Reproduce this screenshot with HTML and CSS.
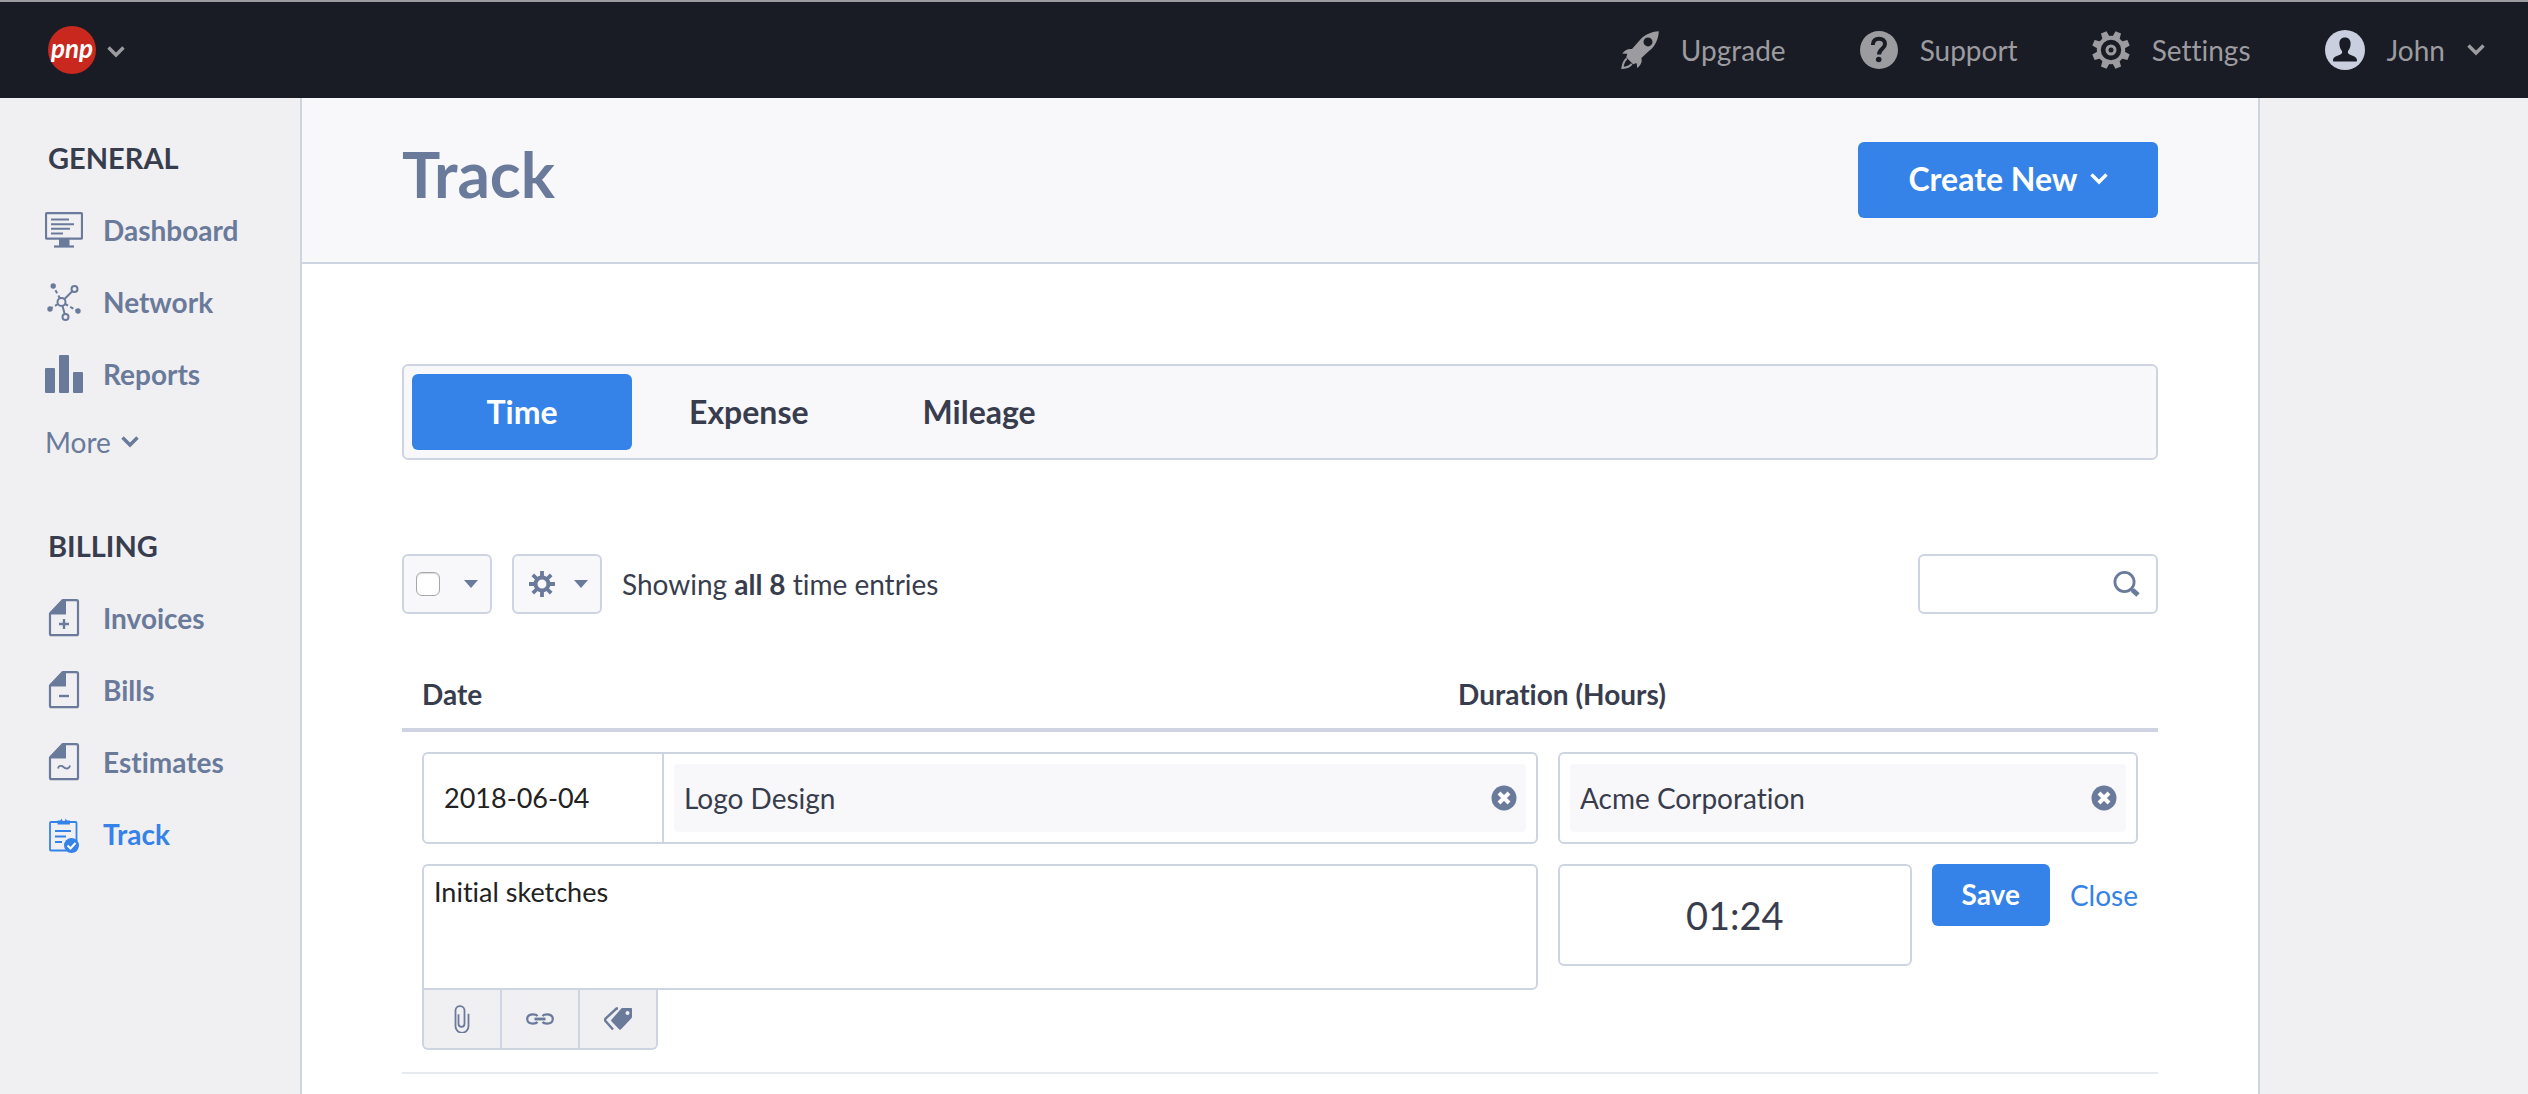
FILE: index.html
```html
<!DOCTYPE html>
<html lang="en">
<head>
<meta charset="utf-8">
<meta name="viewport" content="width=device-width, initial-scale=1">
<title>Track</title>
<link rel="stylesheet" href="styles.css">
</head>
<body>
<svg class="sprite" aria-hidden="true">
  <symbol id="chevron" viewBox="0 0 18 12"><path d="M1.500 1.500 9 9l7.500-7.500" fill="none" stroke="currentColor" stroke-width="3.400"/></symbol>
  <symbol id="caret" viewBox="0 0 14 8"><path d="M0 0h14L7 8z" fill="currentColor"/></symbol>
  <symbol id="page" viewBox="0 0 38 38"><path d="M17.500 1.200h14c1 0 1.500.6 1.500 1.500v32c0 1-.6 1.500-1.500 1.500h-25c-.9 0-1.500-.5-1.500-1.500V14.500z" fill="none" stroke="currentColor" stroke-width="2.200" stroke-linejoin="round"/><path d="M17.500 1H21v14.500H5v-2z" fill="currentColor"/></symbol>
  <symbol id="remove" viewBox="0 0 26 26"><circle cx="13" cy="13" r="12.500" fill="currentColor"/><path d="m8 8 10 10M18 8 8 18" stroke="#fff" stroke-width="4"/></symbol>
</svg>

<header class="topbar">
  <a class="brand" href="#" aria-label="Switch company">
    <span class="brand-mark">pnp</span>
    <svg class="chevron"><use href="#chevron"/></svg>
  </a>
  <nav class="topnav" aria-label="Account">
    <a class="topnav-link" href="#">
      <svg class="icon" viewBox="0 0 38 38" fill="currentColor"><path fill-rule="evenodd" d="M37.800.2C30 .6 23 4 18.500 9.500L11 18c-3.500-.5-7 .8-9.800 4.500l4.300.3c.6 0 .8.400.6 1l-1 2.400 7 7 2.700-1c.6-.2 1 0 1 .7l.3 4c4-2.800 5.200-6.300 4.300-10l8.100-7.300C34 15.500 37.500 8 37.800.2zM27 6.400a4.500 4.500 0 1 1 0 9 4.500 4.500 0 0 1 0-9z"/><path d="M5.800 27.500C3.200 29.500 2 32.500 1.400 37c4.200-.3 7.500-1.500 9.300-4.100" fill="none" stroke="currentColor" stroke-width="2"/></svg>
      <span>Upgrade</span>
    </a>
    <a class="topnav-link" href="#">
      <svg class="icon" viewBox="0 0 38 38"><circle cx="19" cy="19" r="19" fill="currentColor"/><path d="M12.800 14c0-4.300 2.700-6.300 6.200-6.300s6 2 6 5.300c0 4.800-6 4.800-6 10.500" fill="none" stroke="#191c24" stroke-width="4"/><circle cx="18.700" cy="28.500" r="2.800" fill="#191c24"/></svg>
      <span>Support</span>
    </a>
    <a class="topnav-link" href="#">
      <svg class="icon" viewBox="0 0 38 38"><g fill="none" stroke="currentColor"><circle cx="19" cy="19" r="12.200" stroke-width="4"/><circle cx="19" cy="19" r="4" stroke-width="3"/></g><g fill="currentColor" transform="rotate(22.500 19 19)"><g id="teeth"><path d="M16 0h6l1 8h-8zM16 38h6l1-8h-8z"/><path d="M0 16v6l8 1v-8zM38 16v6l-8 1v-8z"/></g><use href="#teeth" transform="rotate(45 19 19)"/></g></svg>
      <span>Settings</span>
    </a>
    <a class="topnav-link" href="#">
      <svg class="icon avatar" viewBox="0 0 40 40"><circle cx="20" cy="20" r="20" fill="#c9cfdf"/><path d="M20 7.500c3.800 0 5.800 2.500 5.600 6.500-.1 3.500-1.400 5.500-2.600 7-.5 2 .2 3 2 3.700 3.600 1.300 7 2.300 7 5.800 0 .8-.3 1-1 1H9c-.7 0-1-.3-1-1 0-3.500 3.400-4.500 7-5.800 1.800-.7 2.500-1.700 2-3.700-1.200-1.500-2.500-3.500-2.600-7-.2-4 1.800-6.500 5.600-6.500z" fill="#191c24"/></svg>
      <span>John</span>
      <svg class="chevron"><use href="#chevron"/></svg>
    </a>
  </nav>
</header>

<div class="layout">
  <aside class="sidebar">
    <section class="side-group">
      <h2 class="side-title">GENERAL</h2>
      <a class="side-link" href="#">
        <svg class="icon" viewBox="0 0 38 38" fill="none" stroke="currentColor"><rect x="1" y="2.200" width="36" height="25.500" rx="1" stroke-width="2.200"/><path d="M6 8.500h18M6 13.200h23M6 17.800h19M6 22.500h12" stroke-width="2"/><path d="M14 28h10.500v7H14z" fill="currentColor" stroke="none"/><path d="M9 35.500h20" stroke-width="2.200"/></svg>
        <span>Dashboard</span>
      </a>
      <a class="side-link" href="#">
        <svg class="icon" viewBox="0 0 38 38" fill="none" stroke="currentColor" stroke-width="2"><circle cx="16.500" cy="19" r="4"/><circle cx="29.500" cy="6" r="3"/><circle cx="20.500" cy="34" r="3"/><path d="m19.500 16 8-8M17.500 23l2.200 8"/><path d="M15 15.500 9 4.500M13 21l-6 3.500M20 21l12 6.500" stroke-dasharray="3.500 2.500"/><g fill="currentColor" stroke="none"><circle cx="8.200" cy="3" r="2.700"/><circle cx="5" cy="26" r="2.700"/><circle cx="33" cy="28" r="2.700"/></g></svg>
        <span>Network</span>
      </a>
      <a class="side-link" href="#">
        <svg class="icon" viewBox="0 0 38 38" fill="currentColor"><rect y="13" width="10" height="25" rx="1"/><rect x="14" width="10" height="38" rx="1"/><rect x="28" y="17" width="10" height="21" rx="1"/></svg>
        <span>Reports</span>
      </a>
      <button class="side-more" type="button">More <svg class="chevron"><use href="#chevron"/></svg></button>
    </section>
    <section class="side-group">
      <h2 class="side-title">BILLING</h2>
      <a class="side-link" href="#">
        <svg class="icon" viewBox="0 0 38 38"><use href="#page"/><path d="M14 25h10M19 20v10" stroke="currentColor" stroke-width="2.400"/></svg>
        <span>Invoices</span>
      </a>
      <a class="side-link" href="#">
        <svg class="icon" viewBox="0 0 38 38"><use href="#page"/><path d="M14 25h10" stroke="currentColor" stroke-width="2.400"/></svg>
        <span>Bills</span>
      </a>
      <a class="side-link" href="#">
        <svg class="icon" viewBox="0 0 38 38"><use href="#page"/><path d="M13 25.500c.5-3 3.500-3.500 5.500-1.500s5.500 2.500 6.500-1.500" fill="none" stroke="currentColor" stroke-width="1.800"/></svg>
        <span>Estimates</span>
      </a>
      <a class="side-link is-active" href="#" aria-current="page">
        <svg class="icon" viewBox="0 0 38 38" fill="none" stroke="currentColor"><rect x="5" y="7" width="26.500" height="28.500" rx="1" stroke-width="1.800"/><path d="M12.500 9.500V5.500h2.800a3.700 3.700 0 0 1 6.800 0h2.800v4z" fill="currentColor" stroke="none"/><circle cx="18.700" cy="4" r="1.900" fill="#f0f0f2" stroke="none"/><path d="M10 16h16M10 21.500h11M10 27h7" stroke-width="2"/><circle cx="26.500" cy="30.500" r="7.500" fill="currentColor" stroke="none"/><path d="m22.500 30.500 3 3 5-5.500" stroke="#fff" stroke-width="2"/></svg>
        <span>Track</span>
      </a>
    </section>
  </aside>

  <main class="main">
    <header class="page-head">
      <h1 class="page-title">Track</h1>
      <button class="btn btn-large" type="button">Create New <svg class="chevron"><use href="#chevron"/></svg></button>
    </header>

    <div class="content">
      <nav class="tabs" aria-label="Entry type">
        <button class="tab is-active" type="button">Time</button>
        <button class="tab" type="button">Expense</button>
        <button class="tab" type="button">Mileage</button>
      </nav>

      <div class="toolbar">
        <div class="tool-button">
          <input class="check" type="checkbox" aria-label="Select all entries">
          <button class="caret-button" type="button" aria-label="Selection options"><svg class="caret"><use href="#caret"/></svg></button>
        </div>
        <button class="tool-button" type="button" aria-label="Actions">
          <svg class="gear" viewBox="0 0 26 26"><circle cx="13" cy="13" r="6.500" fill="none" stroke="currentColor" stroke-width="4"/><path d="M13 0v6M13 20v6M0 13h6M20 13h6M3.800 3.800 8 8M18 18l4.200 4.200M22.200 3.800 18 8M8 18l-4.200 4.200" stroke="currentColor" stroke-width="3.800"/></svg>
          <svg class="caret"><use href="#caret"/></svg>
        </button>
        <p class="summary">Showing <strong>all 8</strong> time entries</p>
        <div class="search">
          <input class="search-input" type="search" aria-label="Search entries">
          <button class="search-button" type="button" aria-label="Search"><svg viewBox="0 0 28 28" fill="none" stroke="currentColor"><circle cx="12.500" cy="12" r="9.600" stroke-width="2.800"/><path d="m19 18.500 2 2" stroke-width="3"/><path d="m20.500 20 5.500 5" stroke-width="5"/></svg></button>
        </div>
      </div>

      <table class="entries">
        <thead>
          <tr><th class="col-date" scope="col">Date</th><th scope="col">Duration (Hours)</th></tr>
        </thead>
        <tbody>
          <tr>
            <td colspan="2">
              <form class="entry">
                <div class="entry-task">
                  <input class="date-input" type="text" aria-label="Date" value="2018-06-04">
                  <div class="token-field">
                    <div class="token">
                      <input class="token-input" type="text" aria-label="Task" value="Logo Design">
                      <button class="token-remove" type="button" aria-label="Clear task"><svg><use href="#remove"/></svg></button>
                    </div>
                  </div>
                </div>
                <div class="entry-client">
                  <div class="token-field">
                    <div class="token">
                      <input class="token-input" type="text" aria-label="Client" value="Acme Corporation">
                      <button class="token-remove" type="button" aria-label="Clear client"><svg><use href="#remove"/></svg></button>
                    </div>
                  </div>
                </div>
                <div class="entry-notes">
                  <textarea class="notes" aria-label="Notes">Initial sketches</textarea>
                  <div class="attach">
                    <button class="attach-button" type="button" aria-label="Attach file"><svg viewBox="0 0 28 28" fill="none" stroke="currentColor" stroke-width="1.800"><path d="M10.500 8.500V18a3 3 0 0 0 6 0V5a4.500 4.500 0 0 0-9-.5V20.500a6.500 6.500 0 0 0 13 0V8" transform="translate(0 .8)"/></svg></button>
                    <button class="attach-button" type="button" aria-label="Add link"><svg viewBox="0 0 28 28" fill="none" stroke="currentColor" stroke-width="2.200"><path d="M11.500 11C10.500 9.600 9 9.400 7 9.400c-3.500 0-5.800 1.300-5.800 4.600S3.500 18.600 7 18.600c2 0 3.500-.2 4.500-1.600M16.500 11c1-1.400 2.500-1.600 4.500-1.600 3.500 0 5.800 1.300 5.800 4.600s-2.300 4.600-5.800 4.600c-2 0-3.500-.2-4.500-1.600"/><path d="M8.500 14h11" stroke-width="2.800"/></svg></button>
                    <button class="attach-button" type="button" aria-label="Add tag"><svg viewBox="0 0 28 28" fill="currentColor"><path fill-rule="evenodd" d="M18.500 3H27c.6 0 1 .4 1 1v7.500c0 1-.3 1.600-1 2.300L17 24.200c-.7.700-1.200.7-1.900 0L7.600 16.600c-.7-.7-.7-1.400 0-2L17 3.800c.5-.5.900-.8 1.500-.8zm5 3a2 2 0 1 0 0 4 2 2 0 0 0 0-4z"/><path d="M14 3.500h-1.500L1.800 13.300c-1 1-1 1.900-.1 3L9 24.500" fill="none" stroke="currentColor" stroke-width="2.400"/></svg></button>
                  </div>
                </div>
                <div class="entry-submit">
                  <input class="duration" type="text" aria-label="Duration" value="01:24">
                  <button class="btn" type="button">Save</button>
                  <a class="close" href="#">Close</a>
                </div>
              </form>
            </td>
          </tr>
        </tbody>
      </table>
    </div>
  </main>
</div>
</body>
</html>
```
FILE: styles.css
```css
:root {
  --ink: #383d4e;
  --slate: #6a7a9b;
  --blue: #3582e8;
  --line: #ced4e2;
  --panel: #f8f8fb;
  --shade: #f0f0f2;
}

* {
  box-sizing: border-box;
}

body {
  margin: 0;
  min-height: 100vh;
  display: flex;
  flex-direction: column;
  background: var(--shade);
  color: var(--ink);
  font: 400 28px/36px Lato, "Open Sans", sans-serif;
  font-variant-ligatures: none;
}

h1, h2, p {
  margin: 0;
}

a {
  color: inherit;
  text-decoration: none;
}

button, input, textarea {
  margin: 0;
  padding: 0;
  border: 0;
  background: none;
  color: inherit;
  font: inherit;
}

input:focus, textarea:focus {
  outline: none;
}

svg {
  display: block;
  flex: none;
}

.sprite {
  position: absolute;
  width: 0;
  height: 0;
}

.icon {
  width: 38px;
  height: 38px;
}

.chevron {
  width: 18px;
  height: 12px;
}

.caret {
  width: 14px;
  height: 8px;
}

/* Top bar */

.topbar {
  display: flex;
  align-items: center;
  justify-content: space-between;
  height: 98px;
  padding: 0 43px 0 48px;
  border-top: 2px solid #9c9ba0;
  background: #191c24;
  color: #9c9ba0;
}

.brand {
  display: flex;
  align-items: center;
  gap: 11px;
}

.brand-mark {
  width: 48px;
  height: 48px;
  border-radius: 50%;
  background: #c8281d;
  color: #fff;
  text-align: center;
  font-size: 26px;
  font-style: italic;
  font-weight: 700;
  line-height: 44px;
}

.brand .chevron {
  margin-top: 4px;
}

.topnav {
  display: flex;
  gap: 74px;
}

.topnav-link {
  display: flex;
  align-items: center;
  gap: 22px;
}

.avatar {
  width: 40px;
  height: 40px;
}

/* Page frame */

.layout {
  flex: 1;
  display: flex;
}

.sidebar {
  flex: none;
  width: 302px;
  padding: 42px 0 0 45px;
  border-right: 2px solid var(--line);
  color: var(--slate);
}

.side-group {
  margin-bottom: 54px;
}

.side-title {
  margin: 0 0 18px 3px;
  color: var(--ink);
  font-size: 29px;
  font-weight: 700;
  line-height: 36px;
}

.side-link {
  display: flex;
  align-items: center;
  gap: 20px;
  height: 72px;
  font-weight: 700;
}

.side-link.is-active {
  color: var(--blue);
}

.side-more {
  display: flex;
  align-items: center;
  gap: 10px;
  height: 64px;
}

.main {
  flex: 1;
  max-width: 1958px;
  border-right: 2px solid var(--line);
  background: #fff;
}

.page-head {
  display: flex;
  align-items: flex-start;
  justify-content: space-between;
  height: 166px;
  padding: 44px 100px 0;
  border-bottom: 2px solid var(--line);
  background: var(--panel);
}

.page-title {
  color: var(--slate);
  font-size: 64px;
  font-weight: 700;
  line-height: 64px;
}

.content {
  padding: 100px 100px 20px;
}

.btn {
  display: flex;
  align-items: center;
  justify-content: center;
  gap: 12px;
  height: 62px;
  padding: 0 30px 2px;
  border-radius: 6px;
  background: var(--blue);
  color: #fff;
  font-weight: 700;
}

.btn-large {
  width: 300px;
  height: 76px;
  font-size: 32px;
}

/* Tabs */

.tabs {
  display: flex;
  padding: 8px;
  border: 2px solid var(--line);
  border-radius: 6px;
  background: var(--panel);
}

.tab {
  min-width: 220px;
  height: 76px;
  padding: 0 57px;
  border-radius: 6px;
  font-size: 32px;
  font-weight: 700;
}

.tab.is-active {
  background: var(--blue);
  color: #fff;
}

/* Toolbar */

.toolbar {
  display: flex;
  align-items: center;
  gap: 20px;
  margin-top: 94px;
}

.tool-button {
  display: flex;
  align-items: center;
  justify-content: space-between;
  width: 90px;
  height: 60px;
  padding: 0 12px;
  border: 2px solid var(--line);
  border-radius: 6px;
  background: var(--panel);
  color: var(--slate);
}

.tool-button .gear {
  margin-left: 3px;
}

.gear {
  width: 26px;
  height: 26px;
}

.check {
  appearance: none;
  width: 24px;
  height: 24px;
  border: 1px solid #a8a8a8;
  border-radius: 6px;
  background: #fff;
  box-shadow: inset 0 1px 1px #ddd;
}

.check:checked {
  background: var(--blue);
}

.search {
  display: flex;
  align-items: center;
  width: 240px;
  height: 60px;
  margin-left: auto;
  padding: 0 16px;
  border: 2px solid var(--line);
  border-radius: 6px;
}

.search-input {
  flex: 1;
  min-width: 0;
}

.search-button {
  width: 28px;
  height: 28px;
  color: var(--slate);
}

/* Time entries */

.entries {
  width: 100%;
  margin-top: 62px;
  border-collapse: separate;
  border-spacing: 0;
  table-layout: fixed;
}

.entries th {
  padding: 0 20px 16px;
  border-bottom: 4px solid var(--line);
  text-align: left;
}

.col-date {
  width: 59%;
}

.entries td {
  padding: 20px 20px 22px;
  border-bottom: 2px solid #e8ecf1;
}

.entry {
  display: grid;
  grid-template-columns: minmax(0, 1fr) 580px;
  gap: 20px;
  align-items: start;
}

.entry-task, .entry-client {
  display: flex;
  border: 2px solid var(--line);
  border-radius: 6px;
}

.date-input {
  width: 240px;
  padding-left: 20px;
  border-right: 2px solid var(--line);
  color: #222;
  font-size: 27px;
}

.token-field {
  flex: 1;
  padding: 10px;
}

.token {
  display: flex;
  align-items: center;
  height: 68px;
  padding: 0 9px 0 10px;
  border-radius: 4px;
  background: var(--panel);
}

.token-input {
  flex: 1;
  min-width: 0;
}

.token-remove, .token-remove svg {
  width: 26px;
  height: 26px;
  color: var(--slate);
}

.notes {
  display: block;
  width: 100%;
  height: 126px;
  padding: 8px 10px;
  border: 2px solid var(--line);
  border-radius: 6px 6px 6px 0;
  color: #222;
  font-size: 27px;
  resize: none;
}

.attach {
  display: flex;
}

.attach-button {
  display: flex;
  align-items: center;
  justify-content: center;
  width: 78px;
  height: 60px;
  border: solid var(--line);
  border-width: 0 2px 2px 0;
  background: var(--shade);
  color: var(--slate);
}

.attach-button:first-child {
  width: 80px;
  border-left-width: 2px;
  border-bottom-left-radius: 6px;
}

.attach-button:last-child {
  border-bottom-right-radius: 6px;
}

.attach-button svg {
  width: 28px;
  height: 28px;
}

.entry-submit {
  display: flex;
  align-items: flex-start;
  gap: 20px;
}

.duration {
  flex: 1;
  min-width: 0;
  height: 102px;
  border: 2px solid var(--line);
  border-radius: 6px;
  text-align: center;
  font-size: 38px;
}

.close {
  color: var(--blue);
  line-height: 62px;
}
```
